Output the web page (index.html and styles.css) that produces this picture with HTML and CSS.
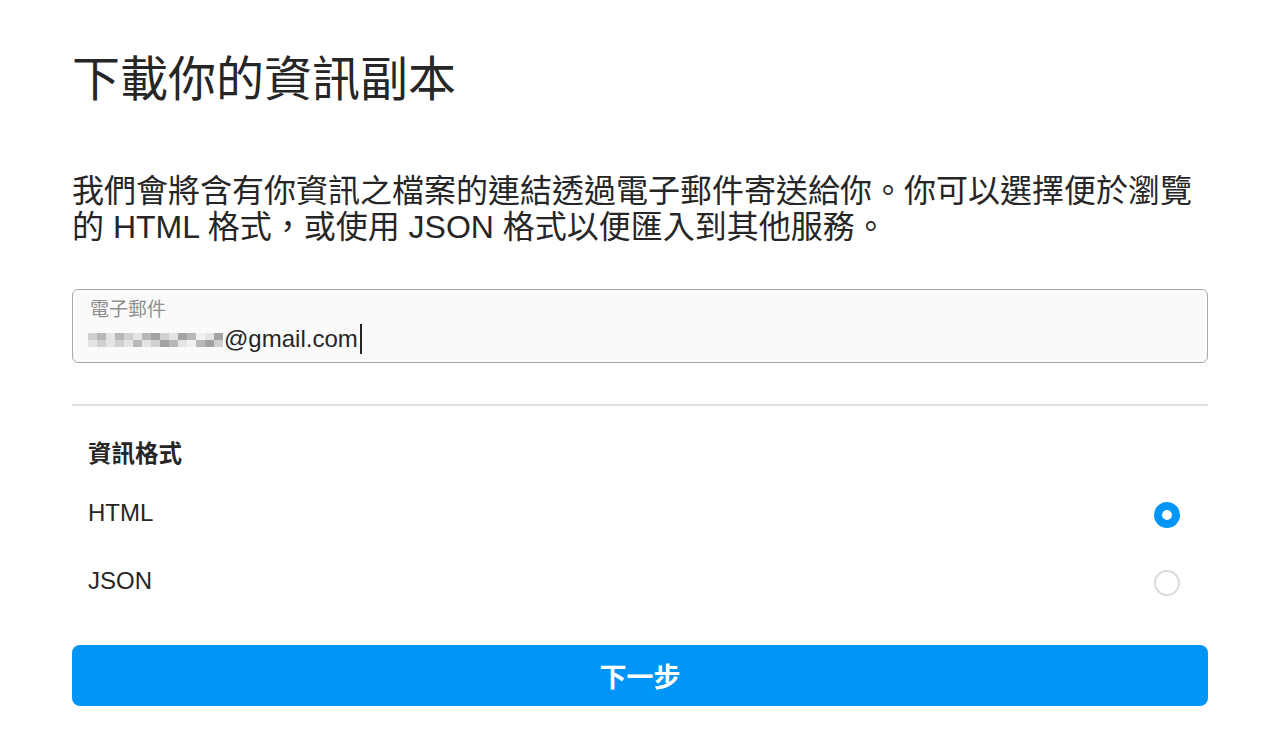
FILE: index.html
```html
<!DOCTYPE html>
<html lang="zh-Hant">
<head>
<meta charset="utf-8">
<title>下載你的資訊副本</title>
<link rel="stylesheet" href="styles.css">
</head>
<body>
<main class="page">
  <h1 class="title">下載你的資訊副本</h1>
  <p class="desc">我們會將含有你資訊之檔案的連結透過電子郵件寄送給你。你可以選擇便於瀏覽的 HTML 格式，或使用 JSON 格式以便匯入到其他服務。</p>

  <label class="field">
    <span class="field-label">電子郵件</span>
    <span class="field-value"><span class="blur" aria-hidden="true"><i class="c2"></i><i class="c1"></i><i class="c3"></i><i class="c1"></i><i class="c2"></i><i class="c3"></i><i class="c1"></i><i class="c4"></i><i class="c2"></i><i class="c3"></i><i class="c4"></i><i class="c1"></i><i class="c5"></i><i class="c3"></i><i class="c4"></i><i class="c3"></i><i class="c2"></i><i class="c3"></i><i class="c2"></i><i class="c3"></i><i class="c1"></i><i class="c3"></i><i class="c2"></i><i class="c4"></i><i class="c1"></i><i class="c3"></i><i class="c5"></i><i class="c1"></i><i class="c4"></i><i class="c2"></i></span>@gmail.com<span class="caret"></span></span>
  </label>

  <hr class="divider">

  <section class="formats">
    <h2 class="formats-title">資訊格式</h2>
    <div class="option">
      <span class="option-label">HTML</span>
      <span class="radio radio-checked"></span>
    </div>
    <div class="option">
      <span class="option-label">JSON</span>
      <span class="radio"></span>
    </div>
  </section>

  <button class="next" type="button">下一步</button>
</main>
</body>
</html>
```

FILE: styles.css
```css
* { box-sizing: border-box; }

html, body {
  margin: 0;
  padding: 0;
  background: #ffffff;
}

body {
  font-family: "Liberation Sans", "Noto Sans CJK TC", sans-serif;
  color: #262626;
  text-spacing-trim: space-all;
}

.page {
  width: 1136px;
  margin: 0 0 0 72px;
  padding-top: 52px;
  display: flex;
  flex-direction: column;
}

.title {
  margin: 0;
  font-size: 48px;
  line-height: 56px;
  font-weight: 400;
  color: #262626;
}

.desc {
  margin: 65px 0 0 0;
  font-size: 32px;
  line-height: 36px;
  color: #262626;
}

.field {
  margin-top: 44px;
  height: 74px;
  border: 1px solid #a8a8a8;
  border-radius: 6px;
  background: #fafafa;
  padding: 8px 17px 0 17px;
  display: flex;
  flex-direction: column;
  gap: 2px;
}

.field-label {
  font-size: 19px;
  line-height: 24px;
  color: #8e8e8e;
}

.field-value {
  font-size: 24px;
  line-height: 28px;
  color: #262626;
  display: flex;
  align-items: center;
  margin-left: -2px;
}

.blur {
  display: inline-grid;
  grid-template-columns: repeat(15, 9px);
  grid-template-rows: repeat(2, 7px);
  filter: blur(0.7px);
  margin-right: 1px;
  margin-top: 2px;
}

.blur i { display: block; }
.blur .c1 { background: #b8b8b8; }
.blur .c2 { background: #d0d0d0; }
.blur .c3 { background: #e4e4e4; }
.blur .c4 { background: #a2a2a2; }
.blur .c5 { background: #f0f0f0; }

.caret {
  display: inline-block;
  width: 2px;
  height: 30px;
  background: #262626;
  margin-left: 2px;
}

.divider {
  margin: 41px 0 0 0;
  border: 0;
  height: 2px;
  background: #e0e0e0;
}

.formats {
  margin-top: 34px;
  padding: 0 28px 0 16px;
  display: flex;
  flex-direction: column;
}

.formats-title {
  margin: 0 0 11px 0;
  font-size: 23.5px;
  line-height: 28px;
  font-weight: 700;
  color: #262626;
}

.option {
  height: 68px;
  display: flex;
  align-items: center;
  justify-content: space-between;
}

.option-label {
  font-size: 24px;
  line-height: 28px;
  color: #262626;
}

.radio {
  width: 26px;
  height: 26px;
  border-radius: 50%;
  border: 2px solid #dbdbdb;
  background: #ffffff;
  margin-top: 3px;
}

.radio-checked {
  border: 8px solid #0095f6;
}

.next {
  margin-top: 30px;
  height: 61px;
  border: 0;
  border-radius: 8px;
  background: #0095f6;
  color: #ffffff;
  font-family: "Liberation Sans", "Noto Sans CJK TC", sans-serif;
  font-size: 27px;
  font-weight: 700;
  cursor: pointer;
}
```
